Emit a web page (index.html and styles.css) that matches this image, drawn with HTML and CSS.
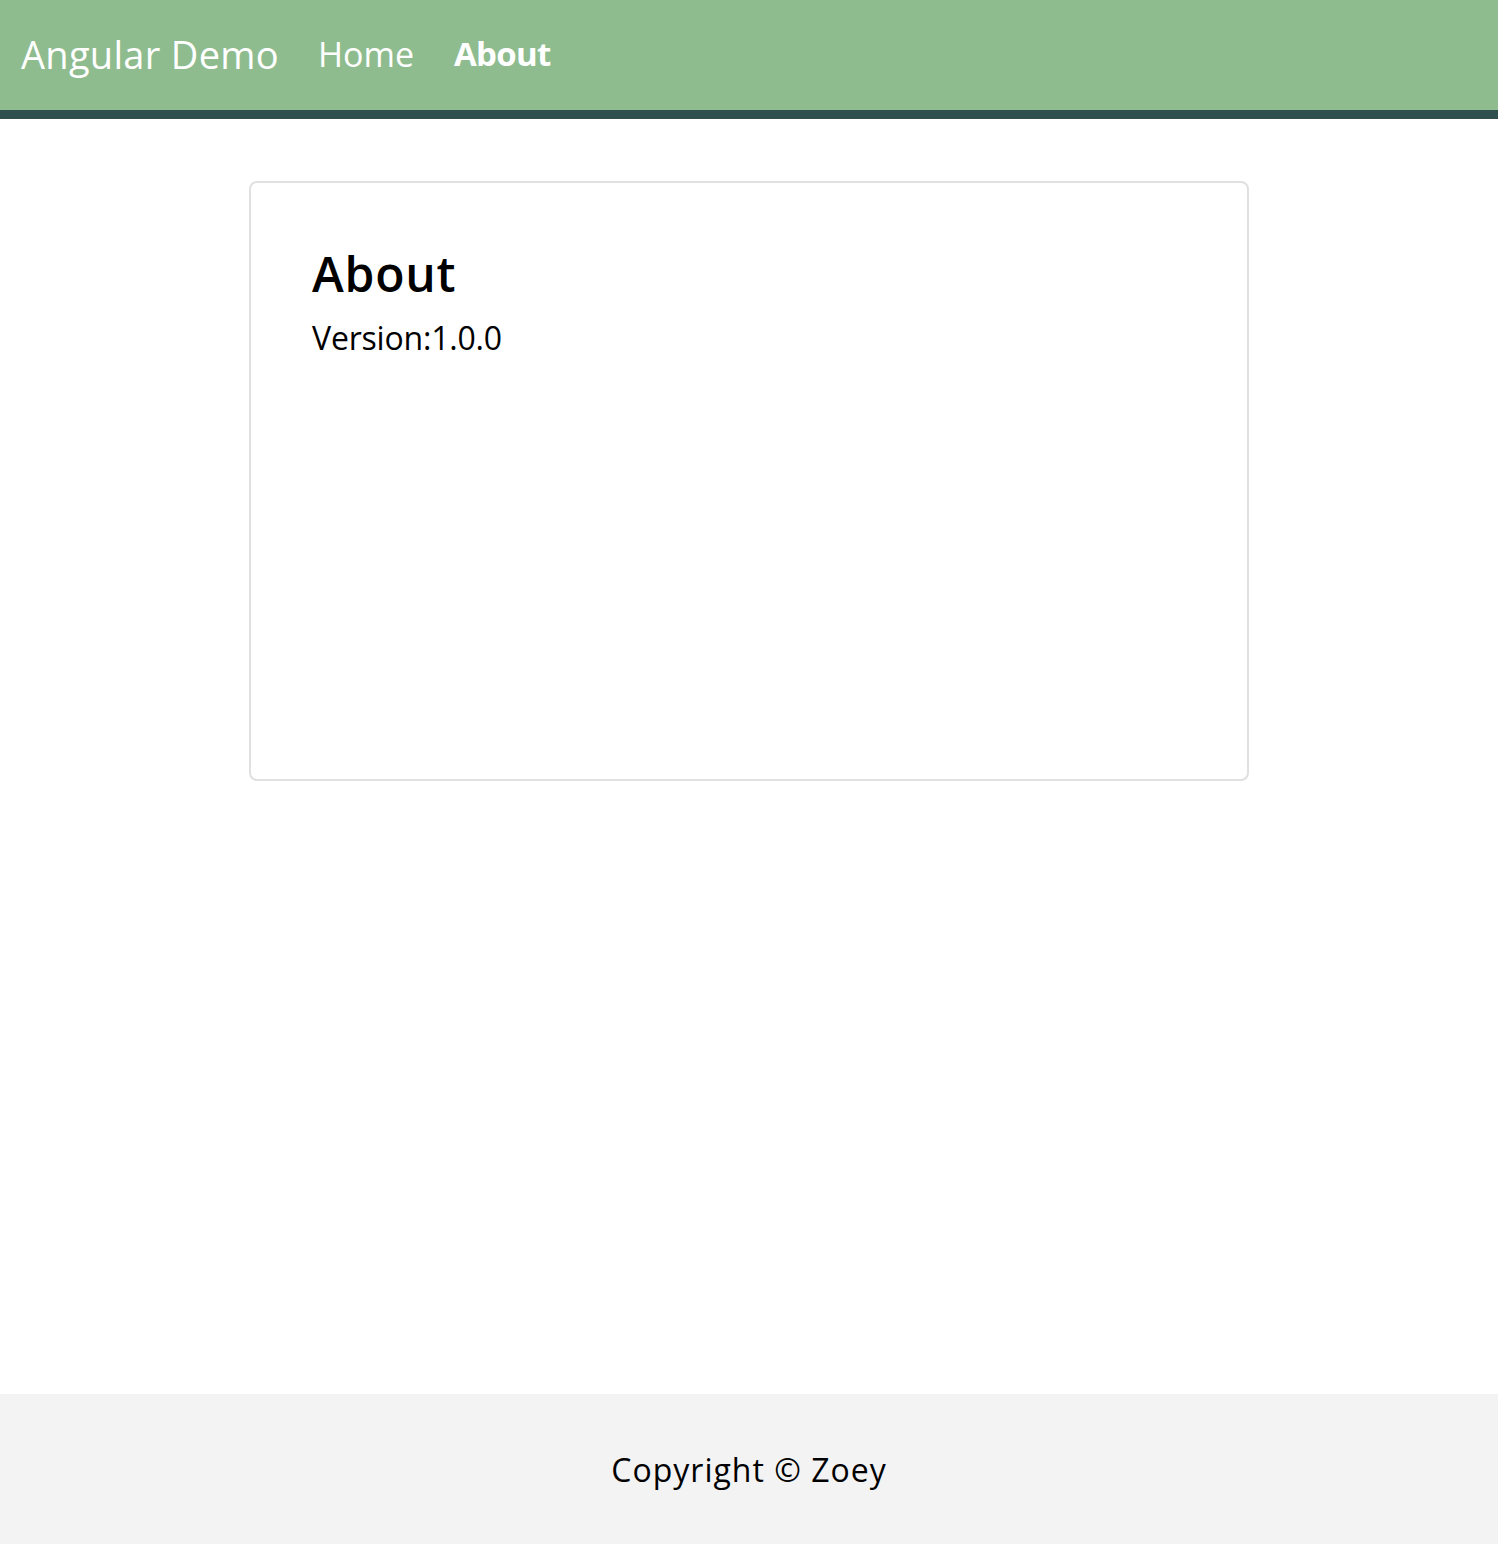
FILE: index.html
```html
<!DOCTYPE html>
<html lang="en">
<head>
<meta charset="utf-8">
<title>Angular Demo</title>
<link rel="stylesheet" href="styles.css">
</head>
<body>
<div class="page">
  <header class="topbar">
    <span class="brand">Angular Demo</span>
    <nav class="nav">
      <a class="nav-link" href="#">Home</a>
      <a class="nav-link active" href="#">About</a>
    </nav>
  </header>
  <main class="main">
    <section class="card">
      <h1 class="card-title">About</h1>
      <p class="card-text">Version:1.0.0</p>
    </section>
  </main>
  <footer class="footer">Copyright © Zoey</footer>
</div>
</body>
</html>
```

FILE: styles.css
```css
* { box-sizing: border-box; }
html, body { margin: 0; padding: 0; }
body {
  font-family: "Open Sans", "DejaVu Sans", sans-serif;
  color: #000;
  background: #fff;
}
.page {
  min-height: 100vh;
  display: flex;
  flex-direction: column;
}
.topbar {
  height: 119px;
  background: #8fbc8f;
  border-bottom: 9px solid #2f4f4f;
  display: flex;
  align-items: center;
  padding: 0 21px 3px;
  gap: 39px;
}
.brand {
  color: #fff;
  font-size: 38px;
  letter-spacing: 0.3px;
}
.nav {
  display: flex;
  gap: 40px;
}
.nav-link {
  color: #fff;
  text-decoration: none;
  font-size: 34px;
}
.nav-link.active {
  font-weight: 700;
  font-size: 33px;
  letter-spacing: -0.7px;
}
.main {
  flex: 1;
  padding-top: 62px;
}
.card {
  width: 1000px;
  height: 600px;
  margin: 0 auto;
  border: 2px solid #e0e0e0;
  border-radius: 8px;
  padding: 62px 60px 62px 61px;
}
.card-title {
  margin: 0;
  font-size: 48px;
  font-weight: 600;
  line-height: 58px;
  letter-spacing: 0.8px;
}
.card-text {
  margin: 13px 0 0;
  font-size: 32px;
  line-height: 44px;
  letter-spacing: -0.2px;
}
.footer {
  height: 150px;
  background: #f3f3f3;
  display: flex;
  align-items: center;
  justify-content: center;
  font-size: 32px;
  letter-spacing: 1px;
}
```
